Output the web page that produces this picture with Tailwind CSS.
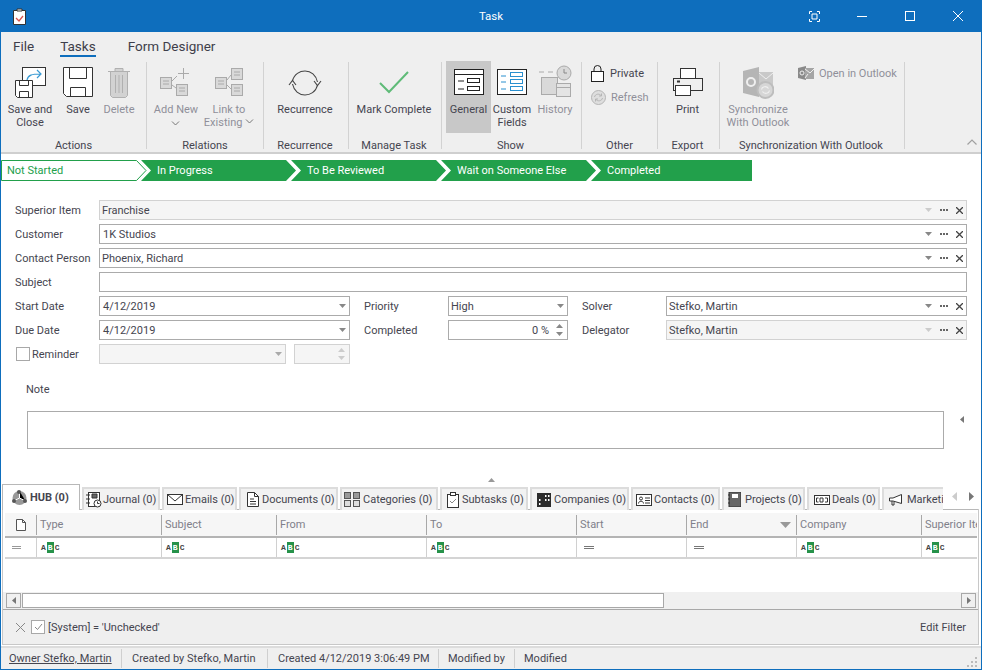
<!DOCTYPE html>
<html>
<head>
<meta charset="utf-8">
<script src="https://cdn.jsdelivr.net/npm/@tailwindcss/browser@4"></script>
</head>
<body class="bg-white">
<div class="w-[982px] h-[670px] overflow-hidden flex flex-col bg-white border-x border-b border-[#0e6ebd] font-['Roboto',sans-serif] text-[11px] leading-[13px] text-[#45454f]">

<!-- title bar -->
<div class="-mx-px h-8 shrink-0 bg-[#0e6ebd] flex items-center relative text-white">
  <svg class="absolute left-[13px] top-[8px]" width="13" height="17" viewBox="0 0 13 17"><path d="M.5 2.500h12v14H.5z" fill="#fff" stroke="#333"/><path d="M4 3V1h5v2z" fill="#fff" stroke="#333"/><path d="M3 10l3 3 4-5" fill="none" stroke="#d9534f" stroke-width="1.3"/></svg>
  <div class="w-full text-center text-[11.5px]">Task</div>
  <svg class="absolute left-[809px] top-[11px]" width="11" height="11" viewBox="0 0 11 11" fill="none" stroke="#fff"><path d="M.5 3V.5H3M8 .5h2.500V3M10.500 8v2.500H8M3 10.500H.5V8M3 3h5v5H3z"/></svg>
  <div class="absolute left-[857px] top-[16px] w-[10px] h-px bg-white"></div>
  <div class="absolute left-[905px] top-[11px] w-[10px] h-[10px] border border-white"></div>
  <svg class="absolute left-[953px] top-[11px]" width="10" height="10" viewBox="0 0 10 10" stroke="#fff"><path d="M0 0l10 10M10 0L0 10"/></svg>
</div>

<!-- ribbon -->
<div class="h-[122px] shrink-0 bg-[#efefef] border-b-2 border-[#cfcfcf] relative">
  <div class="h-7 flex items-start pt-[6px] text-[13.5px] leading-[16px] text-[#3e3e4a]">
    <span class="ml-[12px]">File</span>
    <span class="ml-[26px] relative">Tasks<span class="absolute left-0 right-0 top-[17px] h-[2px] bg-[#0e6ebd]"></span></span>
    <span class="ml-[32px]">Form Designer</span>
  </div>
  <div class="flex h-[87px] mt-[2px]">

    <!-- Actions -->
    <div class="w-[146px] h-full border-r border-[#d2d2d2] flex flex-col">
      <div class="flex pl-[1px]">
        <div class="w-[56px] flex flex-col items-center pt-[3px]">
          <svg class="h-9" width="36" height="36" viewBox="0 0 36 36" fill="none"><rect x="10.500" y="2.500" width="23" height="18" stroke="#333" fill="#fff"/><path d="M15 15c1-5 5-6 13-6M25 5l4 4-4 4" stroke="#3a9bd4" stroke-width="1.2"/><path d="M3.500 15.500h17v17h-15l-2-2z" fill="#fff" stroke="#333"/><path d="M7.500 15.500v5h9v-5M7.500 32.500v-6h9v6" stroke="#333"/></svg>
          <div class="mt-[2px] text-center">Save and<br>Close</div>
        </div>
        <div class="w-[40px] flex flex-col items-center pt-[3px]">
          <svg class="h-9" width="32" height="36" viewBox="0 0 32 36" fill="none" stroke="#333"><path d="M1.500 2.500h29v29h-26l-3-3z" fill="#fff"/><path d="M7.500 2.500v11h17v-11M8.500 31.500v-9h15v9"/></svg>
          <div class="mt-[2px] text-center">Save</div>
        </div>
        <div class="w-[42px] flex flex-col items-center pt-[3px] text-[#8f8f9a]">
          <svg class="h-9" width="24" height="36" viewBox="0 0 24 36" fill="#d2d2d2" stroke="#b0b0b0"><path d="M1 6.500h22M8 6.500v-3h8v3"/><path d="M3.500 6.500h17v24l-2 2h-13l-2-2z"/><path d="M8.500 10v18M12 10v18M15.500 10v18"/></svg>
          <div class="mt-[2px] text-center">Delete</div>
        </div>
      </div>
      <div class="mt-auto -mb-[3px] text-center">Actions</div>
    </div>

    <!-- Relations -->
    <div class="w-[117px] h-full border-r border-[#d2d2d2] flex flex-col">
      <div class="flex pl-[4px]">
        <div class="w-[50px] flex flex-col items-center pt-[3px] text-[#8f8f9a]">
          <svg class="h-9" width="34" height="36" viewBox="0 0 34 36" fill="#d9d9d9" stroke="#aaa"><rect x="1.500" y="12.500" width="11" height="11"/><rect x="17.500" y="19.500" width="11" height="11"/><path d="M4 16h6M4 19h6M20 23h6M20 26h6" fill="none"/><path d="M13 16l5-5M13 20l4 3" fill="none"/><path d="M24.500 3v11M19 8.500h11" fill="none"/></svg>
          <div class="mt-[2px] text-center">Add New<br><svg class="inline" width="9" height="5" viewBox="0 0 9 5" fill="none" stroke="#777"><path d="M1 .5l3.500 3.500L8 .5"/></svg></div>
        </div>
        <div class="w-[56px] flex flex-col items-center pt-[3px] text-[#8f8f9a]">
          <svg class="h-9" width="32" height="36" viewBox="0 0 32 36" fill="#d9d9d9" stroke="#aaa"><rect x="2.500" y="12.500" width="11" height="11"/><rect x="18.500" y="3.500" width="11" height="11"/><rect x="18.500" y="19.500" width="11" height="11"/><path d="M5 16h6M5 19h6M21 7h6M21 10h6M21 23h6M21 26h6" fill="none"/><path d="M14 15l4-5M14 20l4 4" fill="none"/></svg>
          <div class="mt-[2px] text-center">Link to<br>Existing <svg class="inline align-[2px]" width="9" height="5" viewBox="0 0 9 5" fill="none" stroke="#777"><path d="M1 .5l3.500 3.500L8 .5"/></svg></div>
        </div>
      </div>
      <div class="mt-auto -mb-[3px] text-center">Relations</div>
    </div>

    <!-- Recurrence -->
    <div class="w-[85px] h-full border-r border-[#d2d2d2] flex flex-col items-center">
      <div class="flex flex-col items-center pt-[3px] -ml-[2px]">
        <svg class="h-9" width="34" height="36" viewBox="0 0 34 36" fill="none" stroke="#444" stroke-width="1.100"><path d="M4.500 16C6 9 12 6 17 6c6 0 11 4 12.500 11M29.500 20C28 27 22 30 17 30c-6 0-11-4-12.500-11"/><path d="M1 20l3.500-4.500L8 20M26 16l3.500 4.500L33 16"/></svg>
        <div class="mt-[2px] text-center">Recurrence</div>
      </div>
      <div class="mt-auto -mb-[3px] text-center -ml-[2px]">Recurrence</div>
    </div>

    <!-- Manage Task -->
    <div class="w-[93px] h-full border-r border-[#d2d2d2] flex flex-col items-center">
      <div class="flex flex-col items-center pt-[3px] -ml-[2px]">
        <svg class="h-9" width="32" height="36" viewBox="0 0 32 36" fill="none" stroke="#5fbb78" stroke-width="2"><path d="M2 18l9 9L30 7"/></svg>
        <div class="mt-[2px] text-center">Mark Complete</div>
      </div>
      <div class="mt-auto -mb-[3px] text-center -ml-[2px]">Manage Task</div>
    </div>

    <!-- Show -->
    <div class="w-[140px] h-full border-r border-[#d2d2d2] flex flex-col">
      <div class="flex pl-[4px] -mt-px h-[72px]">
        <div class="w-[45px] h-[72px] bg-[#c8c8c8] flex flex-col items-center pt-[4px]">
          <svg class="h-9" width="32" height="36" viewBox="0 0 32 36" fill="none" stroke="#222"><rect x="1.500" y="4.500" width="29" height="25" fill="#fff"/><path d="M1.500 9.500h29M5 16h6M5 24h6"/><rect x="14.500" y="13.500" width="12" height="4"/><rect x="14.500" y="21.500" width="12" height="4"/></svg>
          <div class="mt-[2px] text-center">General</div>
        </div>
        <div class="w-[42px] flex flex-col items-center pt-[4px]">
          <svg class="h-9" width="32" height="36" viewBox="0 0 32 36" fill="none" stroke="#2a90cf"><rect x="1.500" y="4.500" width="29" height="25" fill="#fff" stroke="#222"/><path d="M5 11h5M5 17h5M5 24h5"/><rect x="14.500" y="7.500" width="12" height="4"/><rect x="14.500" y="14.500" width="12" height="4"/><rect x="14.500" y="21.500" width="12" height="4"/></svg>
          <div class="mt-[2px] text-center">Custom<br>Fields</div>
        </div>
        <div class="w-[44px] flex flex-col items-center pt-[4px] text-[#8f8f9a]">
          <svg class="h-9" width="34" height="36" viewBox="0 0 34 36" fill="#d9d9d9" stroke="#aaa"><path d="M1 7h5M10 7h5" fill="none"/><rect x="3.500" y="12.500" width="16" height="17"/><rect x="18.500" y="18.500" width="14" height="13" fill="#e4e4e4" stroke-width="1"/><path d="M18.500 22.500h14" fill="none"/><circle cx="26" cy="8" r="7" fill="#d9d9d9"/><path d="M26 4v4h3" fill="none" stroke="#888"/></svg>
          <div class="mt-[2px] text-center">History</div>
        </div>
      </div>
      <div class="mt-auto -mb-[3px] text-center -ml-[2px]">Show</div>
    </div>

    <!-- Other -->
    <div class="w-[76px] h-full border-r border-[#d2d2d2] flex flex-col">
      <div class="pl-[9px] -mt-px flex flex-col">
        <div class="h-6 flex items-center gap-[6px]">
          <svg width="13" height="17" viewBox="0 0 13 17" fill="none" stroke="#222"><rect x=".5" y="6.500" width="12" height="10" fill="#fff"/><path d="M3 6.500V4a3.500 3.500 0 0 1 7 0v2.500"/></svg>
          <span>Private</span>
        </div>
        <div class="h-6 flex items-center gap-[5px] text-[#8f8f9a]">
          <svg width="15" height="15" viewBox="0 0 15 15" fill="none" stroke="#b5b5b5"><circle cx="7.500" cy="7.500" r="7" fill="#dedede"/><path d="M3.500 7c.5-3 5-4 7-1M11.500 8c-.5 3-5 4-7 1M10.500 3.500V6H8M4.500 11.500V9H7"/></svg>
          <span>Refresh</span>
        </div>
      </div>
      <div class="mt-auto -mb-[3px] text-center">Other</div>
    </div>

    <!-- Export -->
    <div class="w-[62px] h-full border-r border-[#d2d2d2] flex flex-col items-center">
      <div class="flex flex-col items-center pt-[3px] -ml-[2px]">
        <svg class="h-9" width="30" height="36" viewBox="0 0 30 36" fill="#fff" stroke="#333"><rect x="7.500" y="3.500" width="15" height="10"/><rect x=".5" y="13.500" width="29" height="12" fill="#efefef"/><rect x="2.500" y="20.500" width="15" height="10" /><rect x="4.500" y="16" width="2" height="1" fill="#333"/></svg>
        <div class="mt-[2px] text-center">Print</div>
      </div>
      <div class="mt-auto -mb-[3px] text-center -ml-[2px]">Export</div>
    </div>

    <!-- Outlook -->
    <div class="w-[185px] h-full border-r border-[#d2d2d2] flex flex-col">
      <div class="flex">
        <div class="w-[76px] flex flex-col items-center pt-[3px] text-[#8f8f9a]">
          <svg class="h-9" width="32" height="36" viewBox="0 0 32 36"><path d="M1 6l16-4v30L1 28z" fill="#b5b5b5"/><path d="M17 7h14v17H17z" fill="#c9c9c9"/><path d="M17 8l7 6 7-6" fill="none" stroke="#efefef"/><circle cx="9" cy="17" r="4" fill="none" stroke="#efefef" stroke-width="2"/><circle cx="23.500" cy="25" r="8" fill="#d6d6d6" stroke="#bdbdbd" stroke-width="2"/><path d="M19.500 24.500c.5-3 5-4 7-1M27.500 25.500c-.5 3-5 4-7 1" fill="none" stroke="#efefef" stroke-width="1.200"/></svg>
          <div class="mt-[2px] text-center">Synchronize<br>With Outlook</div>
        </div>
        <div class="-mt-px h-6 flex items-center gap-[5px] ml-[2px] text-[#8f8f9a]">
          <svg width="16" height="16" viewBox="0 0 16 16"><path d="M0 3l8-2v14l-8-2z" fill="#8a8a8a"/><path d="M7 3h9v11H7z" fill="#a5a5a5"/><path d="M7 4l5 4 4-4M7 13l3-4" fill="none" stroke="#efefef"/><circle cx="4" cy="8" r="2" fill="none" stroke="#efefef"/></svg>
          <span class="whitespace-nowrap">Open in Outlook</span>
        </div>
      </div>
      <div class="mt-auto -mb-[3px] text-center -ml-[2px]">Synchronization With Outlook</div>
    </div>
  </div>
  <svg class="absolute left-[966px] top-[107px]" width="10" height="6" viewBox="0 0 10 6" fill="none" stroke="#a0a0a0" stroke-width="1.200"><path d="M.5 5.500L5 1l4.500 4.500"/></svg>
</div>

<!-- stage bar -->
<div class="h-[21px] mt-[6px] shrink-0 flex text-white leading-[22px]">
  <div class="relative w-[146px] h-[21px] text-[#22a04b] pl-[6px]">
    <svg class="absolute left-0 top-0" width="146" height="21" viewBox="0 0 146 21" fill="none" stroke="#22a04b"><path d="M.5.5h135L145 10.500l-9.500 10H.5z"/></svg>
    <span class="relative">Not Started</span>
  </div>
  <div class="w-[155px] -ml-[6px] pl-[16px] bg-[#22a04b] [clip-path:polygon(0_0,145px_0,155px_50%,145px_100%,0_100%,10px_50%)]">In Progress</div>
  <div class="w-[155px] -ml-[5px] pl-[16px] bg-[#22a04b] [clip-path:polygon(0_0,145px_0,155px_50%,145px_100%,0_100%,10px_50%)]">To Be Reviewed</div>
  <div class="w-[155px] -ml-[5px] pl-[16px] bg-[#22a04b] [clip-path:polygon(0_0,145px_0,155px_50%,145px_100%,0_100%,10px_50%)]">Wait on Someone Else</div>
  <div class="w-[161px] -ml-[5px] pl-[16px] bg-[#22a04b] [clip-path:polygon(0_0,100%_0,100%_100%,0_100%,10px_50%)]">Completed</div>
</div>

<!-- form -->
<div class="mt-[19px] pl-[14px] flex flex-col gap-1 shrink-0">
  <div class="flex items-center h-5">
    <div class="w-[84px]">Superior Item</div>
    <div class="w-[868px] h-5 border border-[#d2d2d2] bg-[#f5f5f5] flex items-center pl-[2px] pr-[3px]">
      <span class="flex-1">Franchise</span>
      <span class="flex items-center gap-[8px] text-[#bbb]"><svg width="7" height="4" viewBox="0 0 7 4" fill="#ccc"><path d="M0 0h7L3.500 4z"/></svg><svg width="8" height="2" viewBox="0 0 8 2" fill="#666"><path d="M0 0h2v2H0zM3 0h2v2H3zM6 0h2v2H6z"/></svg><svg width="7" height="7" viewBox="0 0 7 7" stroke="#444" stroke-width="1.300"><path d="M0 0l7 7M7 0L0 7"/></svg></span>
    </div>
  </div>
  <div class="flex items-center h-5">
    <div class="w-[84px]">Customer</div>
    <div class="w-[868px] h-5 border border-[#ababab] bg-white flex items-center pl-[3px] pr-[3px]">
      <span class="flex-1">1K Studios</span>
      <span class="flex items-center gap-[8px]"><svg width="7" height="4" viewBox="0 0 7 4" fill="#888"><path d="M0 0h7L3.500 4z"/></svg><svg width="8" height="2" viewBox="0 0 8 2" fill="#666"><path d="M0 0h2v2H0zM3 0h2v2H3zM6 0h2v2H6z"/></svg><svg width="7" height="7" viewBox="0 0 7 7" stroke="#444" stroke-width="1.300"><path d="M0 0l7 7M7 0L0 7"/></svg></span>
    </div>
  </div>
  <div class="flex items-center h-5">
    <div class="w-[84px]">Contact Person</div>
    <div class="w-[868px] h-5 border border-[#ababab] bg-white flex items-center pl-[2px] pr-[3px]">
      <span class="flex-1">Phoenix, Richard</span>
      <span class="flex items-center gap-[8px]"><svg width="7" height="4" viewBox="0 0 7 4" fill="#888"><path d="M0 0h7L3.500 4z"/></svg><svg width="8" height="2" viewBox="0 0 8 2" fill="#666"><path d="M0 0h2v2H0zM3 0h2v2H3zM6 0h2v2H6z"/></svg><svg width="7" height="7" viewBox="0 0 7 7" stroke="#444" stroke-width="1.300"><path d="M0 0l7 7M7 0L0 7"/></svg></span>
    </div>
  </div>
  <div class="flex items-center h-5">
    <div class="w-[84px]">Subject</div>
    <div class="w-[868px] h-5 border border-[#ababab] bg-white"></div>
  </div>
  <div class="flex items-center h-5">
    <div class="w-[84px]">Start Date</div>
    <div class="w-[251px] h-5 border border-[#ababab] bg-white flex items-center pl-[3px] pr-[3px]">
      <span class="flex-1">4/12/2019</span>
      <svg width="7" height="4" viewBox="0 0 7 4" fill="#888"><path d="M0 0h7L3.500 4z"/></svg>
    </div>
    <div class="w-[84px] ml-[14px]">Priority</div>
    <div class="w-[120px] h-5 border border-[#ababab] bg-white flex items-center pl-[2px] pr-[3px]">
      <span class="flex-1">High</span>
      <svg width="7" height="4" viewBox="0 0 7 4" fill="#888"><path d="M0 0h7L3.500 4z"/></svg>
    </div>
    <div class="w-[84px] ml-[14px]">Solver</div>
    <div class="w-[301px] h-5 border border-[#ababab] bg-white flex items-center pl-[2px] pr-[3px]">
      <span class="flex-1">Stefko, Martin</span>
      <span class="flex items-center gap-[8px]"><svg width="7" height="4" viewBox="0 0 7 4" fill="#888"><path d="M0 0h7L3.500 4z"/></svg><svg width="8" height="2" viewBox="0 0 8 2" fill="#666"><path d="M0 0h2v2H0zM3 0h2v2H3zM6 0h2v2H6z"/></svg><svg width="7" height="7" viewBox="0 0 7 7" stroke="#444" stroke-width="1.300"><path d="M0 0l7 7M7 0L0 7"/></svg></span>
    </div>
  </div>
  <div class="flex items-center h-5">
    <div class="w-[84px]">Due Date</div>
    <div class="w-[251px] h-5 border border-[#ababab] bg-white flex items-center pl-[3px] pr-[3px]">
      <span class="flex-1">4/12/2019</span>
      <svg width="7" height="4" viewBox="0 0 7 4" fill="#888"><path d="M0 0h7L3.500 4z"/></svg>
    </div>
    <div class="w-[84px] ml-[14px]">Completed</div>
    <div class="w-[120px] h-5 border border-[#ababab] bg-white flex items-center pr-[4px]">
      <span class="flex-1 text-right pr-[7px]">0 %</span>
      <svg width="7" height="12" viewBox="0 0 7 12" fill="#888"><path d="M0 4h7L3.500 0zM0 8h7l-3.500 4z"/></svg>
    </div>
    <div class="w-[84px] ml-[14px]">Delegator</div>
    <div class="w-[301px] h-5 border border-[#d2d2d2] bg-[#f5f5f5] flex items-center pl-[2px] pr-[3px]">
      <span class="flex-1">Stefko, Martin</span>
      <span class="flex items-center gap-[8px]"><svg width="7" height="4" viewBox="0 0 7 4" fill="#ccc"><path d="M0 0h7L3.500 4z"/></svg><svg width="8" height="2" viewBox="0 0 8 2" fill="#666"><path d="M0 0h2v2H0zM3 0h2v2H3zM6 0h2v2H6z"/></svg><svg width="7" height="7" viewBox="0 0 7 7" stroke="#444" stroke-width="1.300"><path d="M0 0l7 7M7 0L0 7"/></svg></span>
    </div>
  </div>
  <div class="flex items-center h-5">
    <div class="w-[84px] flex items-center gap-[2px]"><span class="ml-px w-[14px] h-[14px] border border-[#a8a8a8] bg-white"></span><span>Reminder</span></div>
    <div class="w-[187px] h-5 border border-[#d2d2d2] bg-[#f5f5f5] flex items-center justify-end pr-[3px]">
      <svg width="7" height="4" viewBox="0 0 7 4" fill="#aaa"><path d="M0 0h7L3.500 4z"/></svg>
    </div>
    <div class="w-[56px] ml-[8px] h-5 border border-[#d2d2d2] bg-[#f5f5f5] flex items-center justify-end pr-[4px]">
      <svg width="7" height="12" viewBox="0 0 7 12" fill="#ccc"><path d="M0 4h7L3.500 0zM0 8h7l-3.500 4z"/></svg>
    </div>
  </div>
</div>

<!-- note -->
<div class="pl-[25px] mt-[19px] shrink-0">Note</div>
<div class="relative pl-[26px] mt-[15px] shrink-0 h-[38px]">
  <div class="w-[917px] h-[38px] border border-[#ababab] bg-white"></div>
  <svg class="absolute left-[959px] top-[5px]" width="4" height="7" viewBox="0 0 4 7" fill="#777"><path d="M4 0v7L0 3.500z"/></svg>
</div>
<div class="h-[37px] shrink-0 flex justify-center pt-[29px] -mb-[1px]">
  <svg class="mt-0" width="7" height="4" viewBox="0 0 7 4" fill="#999"><path d="M0 4h7L3.500 0z"/></svg>
</div>

<!-- tabs -->
<div class="h-[26px] shrink-0 pl-[1px] flex relative -mt-[1px]">
  <div class="w-[941px] flex overflow-hidden gap-[2px] items-end">
    <div class="w-[78px] shrink-0 h-[26px] bg-white border border-b-0 border-[#b8b8b8] flex items-center pl-[8px] gap-[2px] font-bold">
      <svg width="17" height="17" viewBox="0 0 17 17"><circle cx="8.500" cy="9" r="7" fill="#999"/><path d="M8.500 2v7l6 3M8.500 9l-6 3" stroke="#fff"/><circle cx="8" cy="3" r="2" fill="#555"/><circle cx="3" cy="12" r="2" fill="#555"/><circle cx="14" cy="12" r="2" fill="#555"/></svg>
      <span>HUB (0)</span>
    </div>
    <div class="w-[78px] shrink-0 h-[23px] bg-[#f2f2f2] border-2 border-b-0 border-[#dcdcdc] flex items-center pl-[2px] gap-[1px]">
      <svg width="16" height="17" viewBox="0 0 16 17" fill="none" stroke="#333"><rect x="2.500" y="1.500" width="11" height="14" fill="#fff"/><path d="M0 4h4M0 8h4M0 12h4"/><path d="M6 3h5v4H6z" fill="#666"/><circle cx="11.500" cy="12.500" r="3.500" fill="#fff"/><path d="M11.500 10.500v2h2"/></svg>
      <span class="whitespace-nowrap">Journal (0)</span>
    </div>
    <div class="w-[75px] shrink-0 h-[23px] bg-[#f2f2f2] border-2 border-b-0 border-[#dcdcdc] flex items-center pl-[3px] gap-[2px]">
      <svg width="16" height="11" viewBox="0 0 16 11" fill="#fff" stroke="#333"><rect x=".5" y=".5" width="15" height="10"/><path d="M.5.500L8 7 15.500.5" fill="none"/></svg>
      <span class="whitespace-nowrap">Emails (0)</span>
    </div>
    <div class="w-[99px] shrink-0 h-[23px] bg-[#f2f2f2] border-2 border-b-0 border-[#dcdcdc] flex items-center pl-[6px] gap-[3px]">
      <svg width="12" height="15" viewBox="0 0 12 15" fill="#fff" stroke="#333"><path d="M.5.500h7l4 4v10H.5z"/><path d="M7.500.5v4h4M3 7h4M3 9.500h6M3 12h6" fill="none"/></svg>
      <span class="whitespace-nowrap">Documents (0)</span>
    </div>
    <div class="w-[98px] shrink-0 h-[23px] bg-[#f2f2f2] border-2 border-b-0 border-[#dcdcdc] flex items-center pl-[2px] gap-[3px]">
      <svg width="16" height="15" viewBox="0 0 16 15" fill="#ddd" stroke="#555"><rect x=".5" y=".5" width="6" height="6" fill="#999"/><rect x="9.500" y=".5" width="6" height="6" fill="#999"/><rect x=".5" y="8.500" width="6" height="6"/><rect x="9.500" y="8.500" width="6" height="6"/></svg>
      <span class="whitespace-nowrap">Categories (0)</span>
    </div>
    <div class="w-[88px] shrink-0 h-[23px] bg-[#f2f2f2] border-2 border-b-0 border-[#dcdcdc] flex items-center pl-[5px] gap-[3px]">
      <svg width="12" height="16" viewBox="0 0 12 16" fill="#fff" stroke="#333"><rect x=".5" y="2.500" width="11" height="13"/><rect x="3.500" y=".5" width="5" height="3"/><path d="M3 9l2 2 4-4" fill="none" stroke="#888"/></svg>
      <span class="whitespace-nowrap">Subtasks (0)</span>
    </div>
    <div class="w-[99px] shrink-0 h-[23px] bg-[#f2f2f2] border-2 border-b-0 border-[#dcdcdc] flex items-center pl-[5px] gap-[3px]">
      <svg width="14" height="14" viewBox="0 0 14 14"><rect width="14" height="14" y="0" fill="#2b2b2b"/><path d="M8 2h1.500v2H8zM11 2h1.500v2H11zM8 6h1.500v2H8zM11 6h1.500v2H11zM2 6h1.500v2H2zM2 10h1.500v2H2z" fill="#fff"/></svg>
      <span class="whitespace-nowrap">Companies (0)</span>
    </div>
    <div class="w-[89px] shrink-0 h-[23px] bg-[#f2f2f2] border-2 border-b-0 border-[#dcdcdc] flex items-center pl-[3px] gap-[2px]">
      <svg width="16" height="12" viewBox="0 0 16 12" fill="none" stroke="#333"><rect x=".5" y=".5" width="15" height="11" fill="#fff"/><circle cx="5" cy="4.500" r="1.500"/><path d="M2.500 9.500c0-3 5-3 5 0M9 4h5M9 6.500h5M9 9h5"/></svg>
      <span class="whitespace-nowrap">Contacts (0)</span>
    </div>
    <div class="w-[83px] shrink-0 h-[23px] bg-[#f2f2f2] border-2 border-b-0 border-[#dcdcdc] flex items-center pl-[4px] gap-[4px]">
      <svg width="13" height="15" viewBox="0 0 13 15"><rect x="1" width="12" height="15" fill="#666" stroke="#333"/><rect x="4" y="2" width="6" height="4" fill="#fff"/><path d="M0 3h2M0 7h2M0 11h2" stroke="#333"/></svg>
      <span class="whitespace-nowrap">Projects (0)</span>
    </div>
    <div class="w-[73px] shrink-0 h-[23px] bg-[#f2f2f2] border-2 border-b-0 border-[#dcdcdc] flex items-center pl-[5px] gap-[2px]">
      <svg width="16" height="10" viewBox="0 0 16 10" fill="#fff" stroke="#333"><rect x=".5" y=".5" width="15" height="9"/><path d="M4.500 3h-2v4h2M6 3h3v4H6zM11 3h2.500v4H11" fill="none"/></svg>
      <span class="whitespace-nowrap">Deals (0)</span>
    </div>
    <div class="w-[80px] shrink-0 h-[23px] bg-[#f2f2f2] border-2 border-b-0 border-[#dcdcdc] flex items-center pl-[5px] gap-[5px]">
      <svg width="13" height="12" viewBox="0 0 13 12" fill="#fff" stroke="#333"><path d="M12.500.5v9L4 7H.5V4H4zM3 7v4h2V7.500"/></svg>
      <span class="whitespace-nowrap">Marketing</span>
    </div>
  </div>
  <svg class="ml-[9px] mt-[8px]" width="5" height="9" viewBox="0 0 5 9" fill="#ccc"><path d="M5 0v9L0 4.500z"/></svg>
  <svg class="ml-[12px] mt-[8px]" width="5" height="9" viewBox="0 0 5 9" fill="#777"><path d="M0 0v9l5-4.500z"/></svg>
</div>

<!-- content panel -->
<div class="flex-1 ml-[1px] mr-[2px] border border-t-0 border-[#c8c8c8] flex flex-col min-h-0 -mt-px">
  <div class="border-t border-[#b8b8b8] h-[4px] bg-white shrink-0 ml-[77px]"></div>
  <div class="flex-1 bg-white flex flex-col pl-[2px] min-h-0">
    <!-- header -->
    <div class="flex h-[25px] bg-[#f6f6f6] border-b-2 border-[#b4b4b4] text-[#80808a] items-center shrink-0 mr-[1px]">
      <div class="w-[32px] h-[20px] flex items-center pl-[11px] border-r border-[#a8a8a8]">
        <svg width="10" height="12" viewBox="0 0 10 12" fill="#fff" stroke="#555"><path d="M.5.500h6l3 3v8h-9z"/><path d="M6.500.5v3h3" fill="none"/></svg>
      </div>
      <div class="w-[125px] h-[20px] flex items-center pl-[3px] border-r border-[#a8a8a8]">Type</div>
      <div class="w-[115px] h-[20px] flex items-center pl-[3px] border-r border-[#a8a8a8]">Subject</div>
      <div class="w-[150px] h-[20px] flex items-center pl-[3px] border-r border-[#a8a8a8]">From</div>
      <div class="w-[150px] h-[20px] flex items-center pl-[3px] border-r border-[#a8a8a8]">To</div>
      <div class="w-[110px] h-[20px] flex items-center pl-[3px] border-r border-[#a8a8a8]">Start</div>
      <div class="w-[110px] h-[20px] flex items-center justify-between pl-[3px] pr-[5px] border-r border-[#a8a8a8]">End<svg width="11" height="6" viewBox="0 0 11 6" fill="#999"><path d="M0 0h11L5.500 6z"/></svg></div>
      <div class="w-[125px] h-[20px] flex items-center pl-[3px] border-r border-[#a8a8a8]">Company</div>
      <div class="flex-1 min-w-0 h-[20px] flex items-center pl-[3px] whitespace-nowrap overflow-hidden">Superior Item</div>
    </div>
    <!-- filter row -->
    <div class="flex h-[21px] border-b-2 border-[#d4d4d4] items-center shrink-0 mr-[1px] text-[8px] leading-[11px] font-['Liberation_Mono',monospace] font-bold text-[#444]">
      <div class="w-[32px] h-full flex items-center pl-[7px] border-r border-[#d0d0d0]"><span class="w-[9px] h-[3px] border-y border-[#999]"></span></div>
      <div class="w-[125px] h-full flex items-center pl-[4px] border-r border-[#d0d0d0]"><span>A</span><span class="px-[1px] mx-[1px] bg-[#26924a] text-white">B</span><span>C</span></div>
      <div class="w-[115px] h-full flex items-center pl-[4px] border-r border-[#d0d0d0]"><span>A</span><span class="px-[1px] mx-[1px] bg-[#26924a] text-white">B</span><span>C</span></div>
      <div class="w-[150px] h-full flex items-center pl-[4px] border-r border-[#d0d0d0]"><span>A</span><span class="px-[1px] mx-[1px] bg-[#26924a] text-white">B</span><span>C</span></div>
      <div class="w-[150px] h-full flex items-center pl-[4px] border-r border-[#d0d0d0]"><span>A</span><span class="px-[1px] mx-[1px] bg-[#26924a] text-white">B</span><span>C</span></div>
      <div class="w-[110px] h-full flex items-center pl-[7px] border-r border-[#d0d0d0]"><span class="w-[10px] h-[3px] border-y border-[#777]"></span></div>
      <div class="w-[110px] h-full flex items-center pl-[7px] border-r border-[#d0d0d0]"><span class="w-[10px] h-[3px] border-y border-[#777]"></span></div>
      <div class="w-[125px] h-full flex items-center pl-[4px] border-r border-[#d0d0d0]"><span>A</span><span class="px-[1px] mx-[1px] bg-[#26924a] text-white">B</span><span>C</span></div>
      <div class="flex-1 h-full flex items-center pl-[4px]"><span>A</span><span class="px-[1px] mx-[1px] bg-[#26924a] text-white">B</span><span>C</span></div>
    </div>
    <div class="h-[33px] shrink-0"></div>
    <!-- scrollbar -->
    <div class="h-[18px] shrink-0 bg-[#f0f0f0] border-b border-[#a8a8a8] flex items-center pl-[3px] pr-[2px] -ml-[2px]">
      <div class="w-[15px] h-[15px] border border-[#a8a8a8] bg-[#f0f0f0] flex items-center justify-center"><svg width="4" height="7" viewBox="0 0 4 7" fill="#777"><path d="M4 0v7L0 3.500z"/></svg></div>
      <div class="ml-px w-[642px] h-[15px] border border-[#a8a8a8] bg-white"></div>
      <div class="flex-1"></div>
      <div class="w-[15px] h-[15px] border border-[#a8a8a8] bg-[#f0f0f0] flex items-center justify-center"><svg width="4" height="7" viewBox="0 0 4 7" fill="#777"><path d="M0 0v7l4-3.500z"/></svg></div>
    </div>
    <!-- filter panel -->
    <div class="flex-1 bg-[#efefef] flex items-center pl-[13px] pr-[12px] -ml-[2px]">
      <svg width="9" height="9" viewBox="0 0 9 9" stroke="#888"><path d="M0 0l9 9M9 0L0 9"/></svg>
      <span class="ml-[6px] w-[14px] h-[14px] border border-[#a8a8a8] bg-white flex items-center justify-center"><svg width="9" height="8" viewBox="0 0 9 8" fill="none" stroke="#888"><path d="M1 4l2.500 2.500L8 1"/></svg></span>
      <span class="ml-[3px]">[System] = 'Unchecked'</span>
      <span class="ml-auto">Edit Filter</span>
    </div>
  </div>
</div>

<!-- status bar -->
<div class="h-[23px] shrink-0 mt-[1px] bg-[#efefef] border-t-2 border-[#dcdcdc] flex items-center relative">
  <div class="w-[121px] h-[19px] border-r border-[#cfcfcf] flex items-center pl-[8px]"><span class="underline">Owner Stefko, Martin</span></div>
  <div class="w-[146px] h-[19px] border-r border-[#cfcfcf] flex items-center pl-[10px]">Created by Stefko, Martin</div>
  <div class="w-[171px] h-[19px] border-r border-[#cfcfcf] flex items-center pl-[10px]">Created 4/12/2019 3:06:49 PM</div>
  <div class="w-[76px] h-[19px] border-r border-[#cfcfcf] flex items-center pl-[9px]">Modified by</div>
  <div class="pl-[9px]">Modified</div>
  <svg class="absolute right-[4px] bottom-[2px]" width="10" height="10" viewBox="0 0 10 10" fill="#bbb"><path d="M8 0h2v2H8zM4 4h2v2H4zM8 4h2v2H8zM0 8h2v2H0zM4 8h2v2H4zM8 8h2v2H8z"/></svg>
</div>
</div>
</body>
</html>
